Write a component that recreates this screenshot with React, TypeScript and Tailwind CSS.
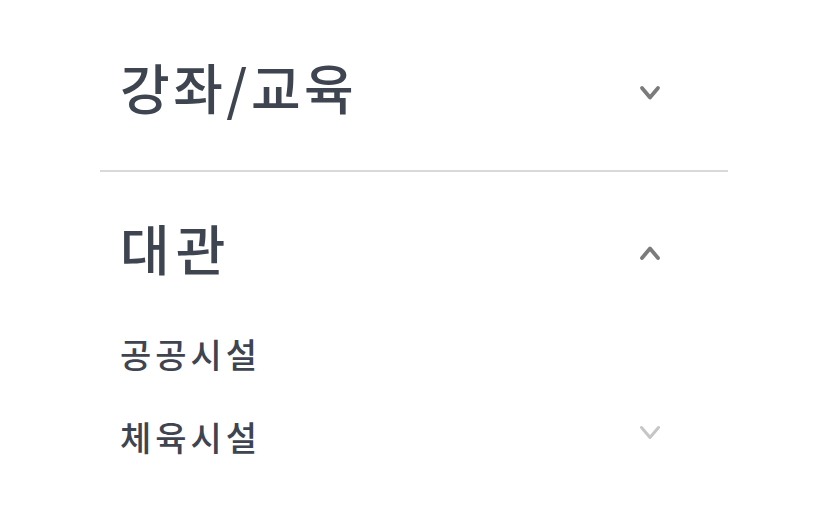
import React from "react";

const font = { fontFamily: '"Noto Sans CJK KR", "Noto Sans", sans-serif' };

function Chevron({ up, light }: { up?: boolean; light?: boolean }) {
  return (
    <svg
      width="24"
      height="16"
      viewBox="0 0 24 16"
      fill="none"
      stroke={light ? "#c6c6c6" : "#7b7b7b"}
      strokeWidth={light ? 3 : 3.8}
      strokeLinecap="round"
      strokeLinejoin="round"
    >
      {up ? (
        <path d="M4 13 L12 3.5 L20 13" />
      ) : light ? (
        <path d="M3.5 2.5 L12 12.5 L20.5 2.5" />
      ) : (
        <path d="M4 3 L12 12.5 L20 3" />
      )}
    </svg>
  );
}

export default function App() {
  return (
    <div className="w-[828px] h-[525px] bg-white overflow-hidden" style={font}>
      <div className="ml-[100px] w-[628px] pt-[12px]">
        {/* 강좌/교육 */}
        <div className="h-[160px] flex items-center justify-between border-b-2 border-[#d9d9d9] pl-[20px] pr-[66px]">
          <span className="-mt-[10px] text-[54px] font-medium text-[#3e4450] tracking-[3.5px]">강좌/교육</span>
          <span className="mt-[4px] flex">
            <Chevron />
          </span>
        </div>

        {/* 대관 */}
        <div className="pt-[20px]">
          <div className="h-[120px] flex items-center justify-between pl-[20px] pr-[66px]">
            <span className="-mt-[10px] text-[54px] font-medium text-[#3e4450] tracking-[6px]">대관</span>
            <span className="mt-[1px] flex">
              <Chevron up />
            </span>
          </div>
          <ul>
            <li className="h-[83px] flex items-center pl-[20px] pr-[66px]">
              <span className="text-[34px] font-medium text-[#3e4450] tracking-[4px]">공공시설</span>
            </li>
            <li className="h-[83px] flex items-center justify-between pl-[20px] pr-[66px]">
              <span className="text-[34px] font-medium text-[#3e4450] tracking-[4px]">체육시설</span>
              <span className="-mt-[8px] flex">
                <Chevron light />
              </span>
            </li>
          </ul>
        </div>
      </div>
    </div>
  );
}
